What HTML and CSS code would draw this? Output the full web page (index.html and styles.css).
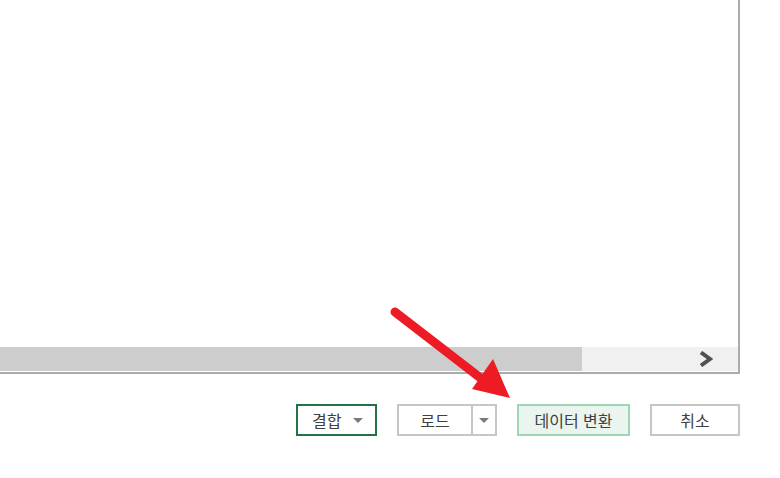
FILE: index.html
```html
<!DOCTYPE html>
<html lang="ko">
<head>
  <meta charset="UTF-8">
  <meta name="viewport" content="width=device-width, initial-scale=1.0">
  <title>쿼리 미리 보기</title>
  <link rel="stylesheet" href="styles.css">
</head>
<body>

  <div class="preview">
    <!-- Horizontal scroll bar at the bottom of the preview -->
    <div class="hscroll">
      <div class="hscroll-thumb"></div>
      <div class="hscroll-track">
        <svg class="chevron" width="14" height="16" viewBox="0 0 14 16">
          <path d="M2 1.5 L11 8 L2 14.5" fill="none" stroke="#505050" stroke-width="4"/>
        </svg>
      </div>
    </div>
  </div>

  <div class="actions">
    <button class="btn btn-combine">
      <span>결합</span>
      <span class="caret"></span>
    </button>
    <div class="btn btn-split">
      <span class="split-main">로드</span>
      <span class="split-arrow"><span class="caret"></span></span>
    </div>
    <button class="btn btn-transform">데이터 변환</button>
    <button class="btn btn-cancel">취소</button>
  </div>

  <!-- Red pointer arrow -->
  <svg class="pointer" width="130" height="110" viewBox="0 0 130 110">
    <line x1="8" y1="13" x2="100" y2="84" stroke="#ed1c24" stroke-width="9" stroke-linecap="round"/>
    <polygon points="123,99 106,60 85,90" fill="#ed1c24"/>
  </svg>

</body>
</html>
```

FILE: styles.css
```css
body {
  margin: 0;
  background-color: #ffffff;
  font-family: "Noto Sans CJK KR", "Noto Sans", sans-serif;
  color: #404040;
}

/* Preview pane */
.preview {
  width: 738px;
  height: 371px;
  padding-bottom: 1px;
  border-right: 2px solid #ababab;
  border-bottom: 2px solid #ababab;
  display: flex;
  flex-direction: column;
  justify-content: flex-end;
}

.hscroll {
  display: flex;
  height: 24px;
}

.hscroll-thumb {
  width: 582px;
  background-color: #cdcdcd;
}

.hscroll-track {
  flex: 1;
  background-color: #f0f0f0;
  display: flex;
  align-items: center;
  justify-content: flex-end;
  padding-right: 25px;
}

/* Button row */
.actions {
  width: 740px;
  margin-top: 30px;
  display: flex;
  justify-content: flex-end;
  gap: 20px;
}

.btn {
  box-sizing: border-box;
  height: 32px;
  border: 2px solid #c6c6c6;
  background-color: #ffffff;
  font-family: inherit;
  font-size: 16px;
  color: #404040;
  display: flex;
  align-items: center;
  justify-content: center;
  padding: 0;
}

.caret {
  width: 0;
  height: 0;
  border-left: 5px solid transparent;
  border-right: 5px solid transparent;
  border-top: 5px solid #7a7a7a;
}

.btn-combine {
  width: 81px;
  border-color: #217346;
  justify-content: flex-start;
  padding-left: 14px;
  gap: 12px;
}

.btn-split {
  width: 100px;
  justify-content: flex-start;
}

.split-main {
  width: 72px;
  height: 100%;
  display: flex;
  align-items: center;
  justify-content: center;
  border-right: 2px solid #c6c6c6;
}

.split-arrow {
  flex: 1;
  height: 100%;
  display: flex;
  align-items: center;
  justify-content: center;
}

.btn-transform {
  width: 113px;
  border-color: #9fd5b7;
  background-color: #e9f5ee;
}

.btn-cancel {
  width: 90px;
}

.pointer {
  position: absolute;
  left: 387px;
  top: 299px;
}
```
